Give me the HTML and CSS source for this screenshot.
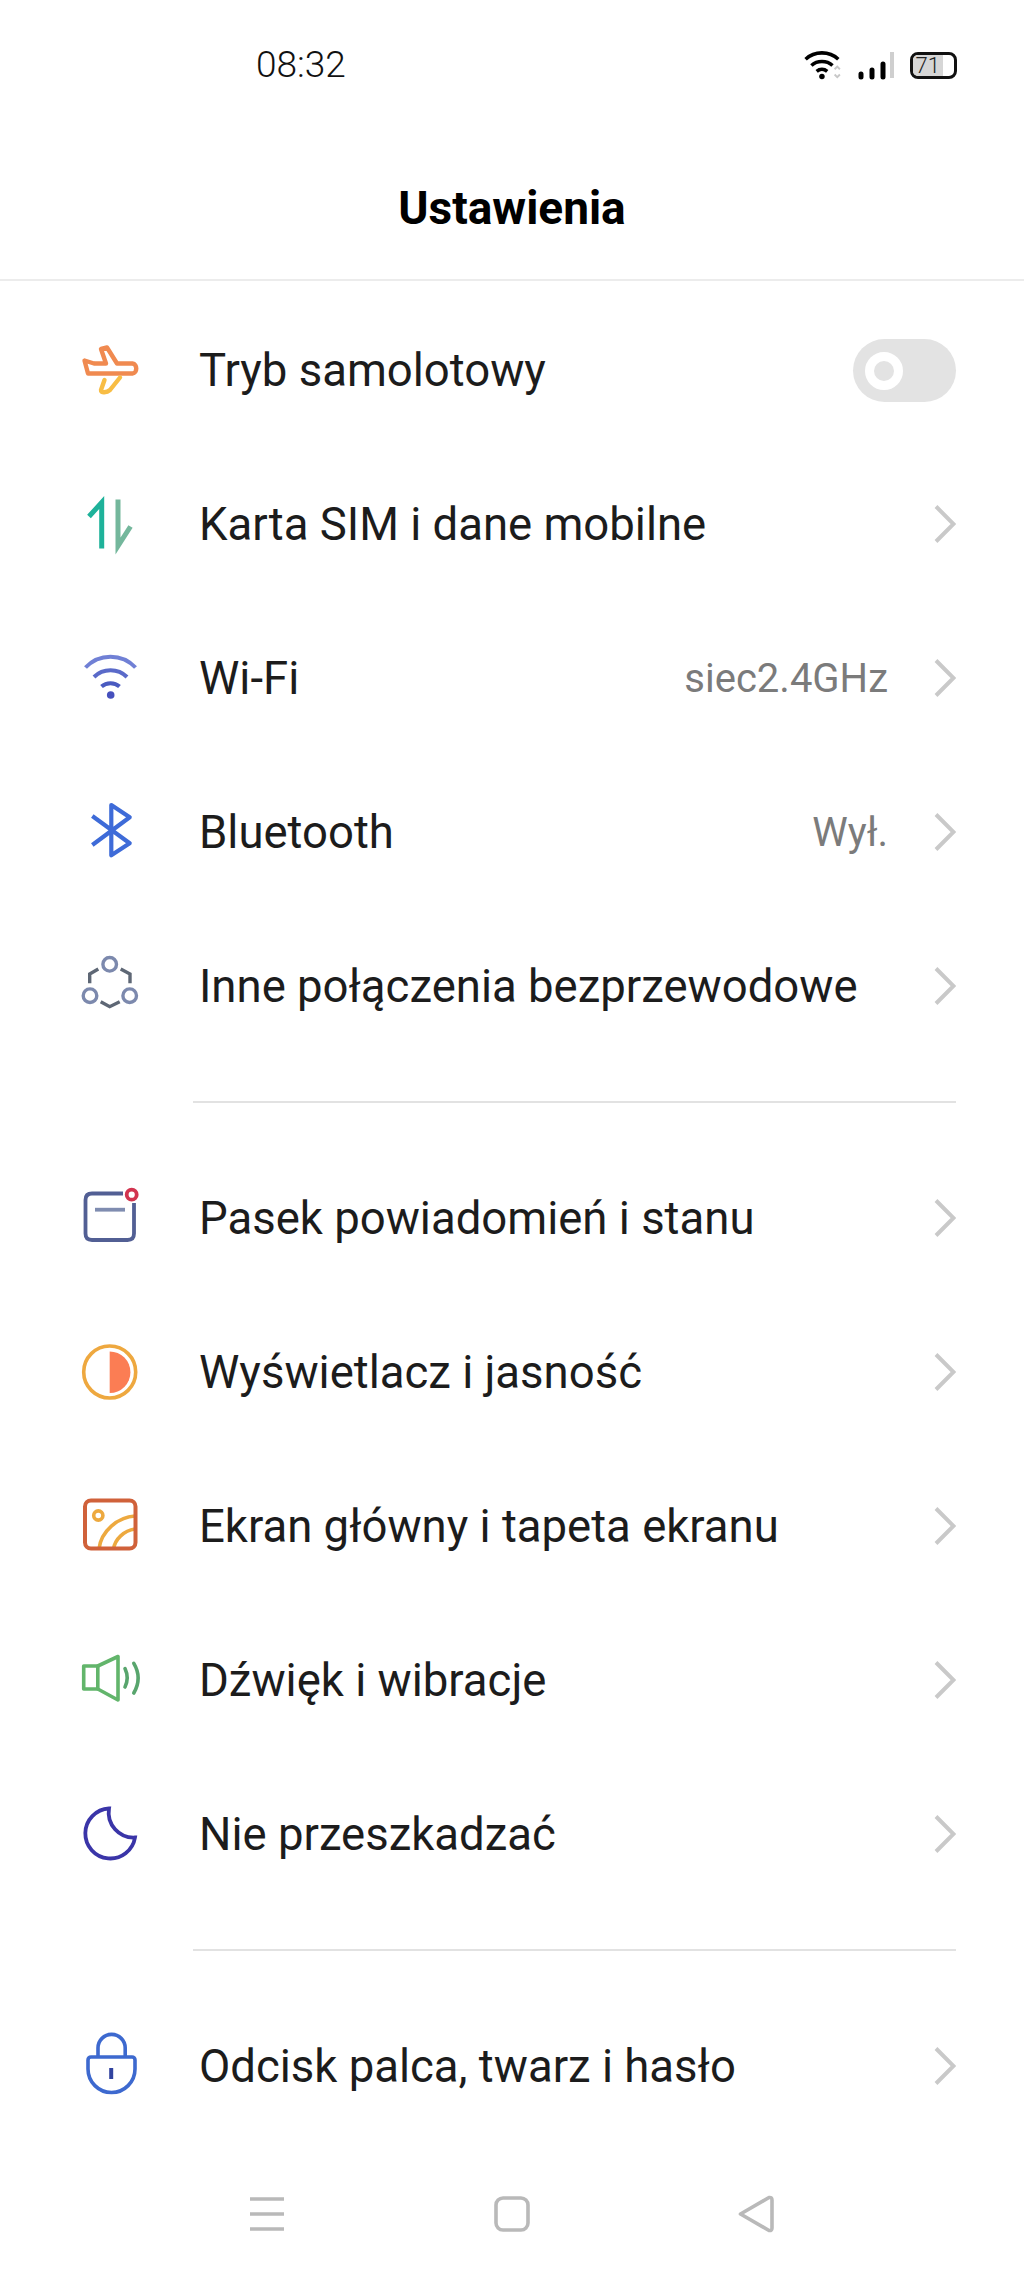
FILE: index.html
```html
<!DOCTYPE html>
<html lang="pl">
<head>
    <meta charset="UTF-8">
    <title>Ustawienia</title>
    <link rel="stylesheet" href="styles.css">
</head>
<body>
    <div class="phone">
        <!-- Status bar -->
        <div class="status-bar">
            <span class="clock">08:32</span>
            <div class="status-icons">
                <svg class="status-wifi" width="38" height="32" viewBox="0 0 36 30" fill="none" stroke="#000" stroke-width="3.4">
                    <path d="M1.5 9.5C10 1.5 24 1.5 32.5 9.5"/>
                    <path d="M7 15.5C12.5 10.5 21.5 10.5 27 15.5"/>
                    <path d="M12 21C15 18.5 19 18.5 22 21"/>
                    <circle cx="17" cy="26" r="2.6" fill="#000" stroke="none"/>
                    <path d="M29 19l2.5-2.5 2.5 2.5M29 24l2.5 2.5 2.5-2.5" stroke="#c8c8c8" stroke-width="1.8"/>
                </svg>
                <svg class="status-signal" width="36" height="30" viewBox="0 0 36 30" fill="none" stroke-width="5" stroke-linecap="round">
                    <path d="M3 24v3M14 20v7M25 14v13" stroke="#000"/>
                    <path d="M34 2v26" stroke="#cfcfcf" stroke-linecap="butt" stroke-width="4"/>
                </svg>
                <div class="battery"><span class="battery-level">71</span></div>
            </div>
        </div>

        <header class="title-bar">
            <h1>Ustawienia</h1>
        </header>

        <div class="group">
            <div class="row">
                <svg class="row-icon" viewBox="0 0 60 60" fill="none" stroke-width="4.4" stroke-linejoin="round" stroke-linecap="round">
                    <path d="M21 9L27 7.5L37 23.5H52.5C57.5 24 57.5 33 52.5 33.5H8L4.5 20.5L14 23.5H26Z" stroke="#f08a50"/>
                    <path d="M40 37.5L30 50C27 52.5 20.5 53.5 21 50L24.5 40" stroke="#f8bd44"/>
                </svg>
                <span class="row-label">Tryb samolotowy</span>
                <div class="toggle"><span class="toggle-knob"></span></div>
            </div>
            <div class="row">
                <svg class="row-icon" viewBox="0 0 60 60" fill="none" stroke-width="5">
                    <path d="M21.7 54.5V8.5L9 22.5" stroke="#1eb29a"/>
                    <path d="M38 5.5V52L50.5 32.5" stroke="#74b79c"/>
                </svg>
                <span class="row-label">Karta SIM i dane mobilne</span>
                <svg class="chevron" viewBox="0 0 22 38" fill="none"><path d="M2 1.5L19.5 19L2 36.5"/></svg>
            </div>
            <div class="row">
                <svg class="row-icon" viewBox="0 0 60 60" fill="none" stroke-width="4">
                    <path d="M5.5 19.5C19 5 42 5 55.5 19.5" stroke="#7080d5"/>
                    <path d="M14 29C23 20 38 20 47 29" stroke="#5a6ac9"/>
                    <path d="M21.5 38.5C26.5 34 34.5 34 39.5 38.5" stroke="#4a5bc0"/>
                    <circle cx="30.7" cy="47" r="3.8" fill="#4650bd"/>
                </svg>
                <span class="row-label">Wi-Fi</span>
                <span class="row-value">siec2.4GHz</span>
                <svg class="chevron" viewBox="0 0 22 38" fill="none"><path d="M2 1.5L19.5 19L2 36.5"/></svg>
            </div>
            <div class="row">
                <svg class="row-icon" viewBox="0 0 60 60" fill="none" stroke="#3e6bd8" stroke-width="4.2" stroke-linejoin="round">
                    <path d="M12.3 14L49.7 41.3L31.3 53.3V3L49.7 15.3L12.3 43"/>
                </svg>
                <span class="row-label">Bluetooth</span>
                <span class="row-value">Wył.</span>
                <svg class="chevron" viewBox="0 0 22 38" fill="none"><path d="M2 1.5L19.5 19L2 36.5"/></svg>
            </div>
            <div class="row">
                <svg class="row-icon" viewBox="0 0 60 60" fill="none" stroke-width="3.4">
                    <path d="M18.3 13L9.7 18V27.3M40.7 13L50 18V27.3M20.7 45.7L29.7 50.7L39.7 45.7" stroke="#5e6775"/>
                    <circle cx="29.7" cy="8.3" r="6.8" stroke="#7c89ad"/>
                    <circle cx="10" cy="39.7" r="6.8" stroke="#7c89ad"/>
                    <circle cx="49.7" cy="39.7" r="6.8" stroke="#7c89ad"/>
                </svg>
                <span class="row-label">Inne połączenia bezprzewodowe</span>
                <svg class="chevron" viewBox="0 0 22 38" fill="none"><path d="M2 1.5L19.5 19L2 36.5"/></svg>
            </div>
        </div>

        <div class="divider"></div>

        <div class="group">
            <div class="row">
                <svg class="row-icon" viewBox="0 0 60 60" fill="none" stroke-width="3.8">
                    <path d="M43 5.5H12Q5.5 5.5 5.5 12V45.5Q5.5 52 12 52H47.5Q54 52 54 45.5V15" stroke="#525f94"/>
                    <path d="M15 21.7H45" stroke="#7f8cb0"/>
                    <circle cx="51.7" cy="6.7" r="5" stroke="#d2344f"/>
                </svg>
                <span class="row-label">Pasek powiadomień i stanu</span>
                <svg class="chevron" viewBox="0 0 22 38" fill="none"><path d="M2 1.5L19.5 19L2 36.5"/></svg>
            </div>
            <div class="row">
                <svg class="row-icon" viewBox="0 0 60 60" fill="none">
                    <circle cx="29.7" cy="30" r="26" stroke="#eea83f" stroke-width="3.6"/>
                    <path d="M29.7 9.5A20.7 20.7 0 0 1 29.7 51Z" fill="#fb7d54"/>
                </svg>
                <span class="row-label">Wyświetlacz i jasność</span>
                <svg class="chevron" viewBox="0 0 22 38" fill="none"><path d="M2 1.5L19.5 19L2 36.5"/></svg>
            </div>
            <div class="row">
                <svg class="row-icon" viewBox="0 0 60 60" fill="none" stroke-width="3.6">
                    <path d="M19 53C21 35 38 21 55 20" stroke="#eda93f"/>
                    <path d="M33.5 53C35 43 44 34.5 55 33" stroke="#eda93f"/>
                    <circle cx="18.3" cy="19.5" r="4.6" stroke="#eda93f"/>
                    <rect x="5" y="4.5" width="50.5" height="48" rx="6" stroke="#d0613a" stroke-width="4"/>
                </svg>
                <span class="row-label">Ekran główny i tapeta ekranu</span>
                <svg class="chevron" viewBox="0 0 22 38" fill="none"><path d="M2 1.5L19.5 19L2 36.5"/></svg>
            </div>
            <div class="row">
                <svg class="row-icon" viewBox="0 0 60 60" fill="none" stroke-width="3.6" stroke-linejoin="round" stroke-linecap="round">
                    <path d="M17.8 16H3.7V39H17.8Z" stroke="#62b56b"/>
                    <path d="M17.8 16L38 6.5V50L17.8 39" stroke="#62b56b"/>
                    <path d="M45 18.6Q49.4 28 45 37M53.8 13.4Q62.5 28 53.8 43" stroke="#58a56d"/>
                </svg>
                <span class="row-label">Dźwięk i wibracje</span>
                <svg class="chevron" viewBox="0 0 22 38" fill="none"><path d="M2 1.5L19.5 19L2 36.5"/></svg>
            </div>
            <div class="row">
                <svg class="row-icon" viewBox="0 0 60 60" fill="none" stroke="#3a35a8" stroke-width="3.8" stroke-linejoin="miter">
                    <path d="M29 4.5A25 25 0 1 0 55 33.5A25 25 0 0 1 29 4.5Z"/>
                </svg>
                <span class="row-label">Nie przeszkadzać</span>
                <svg class="chevron" viewBox="0 0 22 38" fill="none"><path d="M2 1.5L19.5 19L2 36.5"/></svg>
            </div>
        </div>

        <div class="divider"></div>

        <div class="group">
            <div class="row">
                <svg class="row-icon" viewBox="0 0 60 60" fill="none" stroke="#3d69cf" stroke-width="3.6">
                    <path d="M18 21V12A13.6 13.6 0 0 1 45.2 12V21"/>
                    <path d="M11 21H52A3 3 0 0 1 55 24V33A23.5 23.5 0 0 1 8 33V24A3 3 0 0 1 11 21Z"/>
                    <path d="M31.2 32V43" stroke="#31439f" stroke-width="4"/>
                </svg>
                <span class="row-label">Odcisk palca, twarz i hasło</span>
                <svg class="chevron" viewBox="0 0 22 38" fill="none"><path d="M2 1.5L19.5 19L2 36.5"/></svg>
            </div>
        </div>

        <!-- Navigation buttons -->
        <nav class="nav-bar">
            <svg class="nav-icon" viewBox="0 0 36 36" fill="none"><path d="M1 3H35M1 18H35M1 33H35"/></svg>
            <svg class="nav-icon" viewBox="0 0 36 36" fill="none"><rect x="2" y="2" width="32" height="32" rx="7"/></svg>
            <svg class="nav-icon" viewBox="0 0 36 36" fill="none"><path d="M1.5 18L30 1.5Q33 1 33 4V32Q33 35 30 34.5Z" stroke-linejoin="round"/></svg>
        </nav>
    </div>
</body>
</html>
```

FILE: styles.css
```css
:root {
    --text-color: #1c1c1c;
    --value-color: #7b7b7b;
    --line-color: #e2e2e2;
}
* {
    box-sizing: border-box;
}
body {
    margin: 0;
    background-color: #fff;
    color: var(--text-color);
    font-family: Roboto, 'Liberation Sans', sans-serif;
}
.phone {
    width: 1024px;
    height: 2276px;
    overflow: hidden;
}
.status-bar {
    height: 130px;
    padding: 46px 67px 0 256px;
    display: flex;
    justify-content: space-between;
    align-items: flex-start;
}
.clock {
    font-size: 37px;
    font-weight: 300;
    line-height: 38px;
    color: #111;
}
.status-icons {
    display: flex;
    align-items: center;
    gap: 16px;
    margin-top: 3px;
}
.battery {
    width: 47px;
    height: 27px;
    border: 3px solid #111;
    border-radius: 8px;
    overflow: hidden;
}
.battery-level {
    display: block;
    width: 72%;
    height: 100%;
    background-color: #d6d6d6;
    font-size: 22px;
    font-weight: 300;
    line-height: 21px;
    text-align: center;
    color: #222;
}
.title-bar {
    height: 151px;
    border-bottom: 2px solid #ececec;
}
.title-bar h1 {
    margin: 0;
    padding-top: 52px;
    font-size: 46px;
    line-height: 52px;
    font-weight: 700;
    text-align: center;
    color: #000;
}
.group {
    padding-top: 12px;
}
.divider + .group {
    padding-top: 38px;
}
.row {
    height: 154px;
    padding: 0 68px 0 80px;
    display: flex;
    align-items: center;
}
.row-icon {
    width: 60px;
    height: 60px;
    flex-shrink: 0;
    overflow: visible;
}
.row-label {
    flex: 1;
    margin-left: 59px;
    font-size: 45.5px;
    color: var(--text-color);
}
.row-value {
    margin-right: 46px;
    font-size: 40px;
    color: var(--value-color);
}
.chevron {
    width: 22px;
    height: 38px;
    flex-shrink: 0;
    stroke: #c9c9c9;
    stroke-width: 4;
}
.toggle {
    width: 103px;
    height: 63px;
    padding: 13px 0 0 12px;
    background-color: #e3e3e3;
    border-radius: 32px;
}
.toggle-knob {
    display: block;
    width: 38px;
    height: 38px;
    border: 9px solid #fff;
    border-radius: 50%;
}
.divider {
    height: 2px;
    margin: 38px 68px 0 193px;
    background-color: var(--line-color);
}
.nav-bar {
    height: 132px;
    padding: 53px 0 0 249px;
    display: flex;
    gap: 209px;
    align-items: flex-start;
}
.nav-icon {
    width: 36px;
    height: 36px;
    overflow: visible;
    stroke: #b9b9b9;
    stroke-width: 3.6;
}
```
